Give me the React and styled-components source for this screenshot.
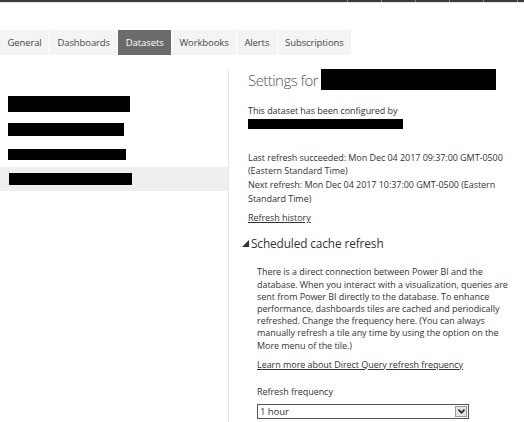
import React from 'react';
import styled, { createGlobalStyle } from 'styled-components';

const Global = createGlobalStyle`
  html, body {
    margin: 0;
    padding: 0;
    background: #fff;
  }
  body {
    font-family: 'Open Sans', 'Noto Sans', sans-serif;
    color: #333;
    width: 524px;
    height: 422px;
    overflow: hidden;
  }
`;

const Page = styled.div`
  display: flex;
  flex-direction: column;
  height: 422px;
`;

// dark strip across the top, with faint tick marks on the right
const TopRule = styled.div`
  flex-shrink: 0;
  height: 2px;
  border-bottom: 1px solid #e4e4e4;
  background-color: #3a3a3a;
  background-image: repeating-linear-gradient(
    to right,
    #8a8a8a 0 1px,
    transparent 1px 34px
  );
  background-size: 177px 100%;
  background-position: 347px 0;
  background-repeat: no-repeat;
`;

const Tabs = styled.nav`
  flex-shrink: 0;
  display: flex;
  gap: 1px;
  margin-top: 27px;
`;

const Tab = styled.div`
  height: 25px;
  padding: 0 7.4px;
  display: flex;
  align-items: center;
  font-size: 9.5px;
  letter-spacing: -0.1px;
  background: ${(p) => (p.$active ? '#6b6b6b' : '#f4f4f4')};
  color: ${(p) => (p.$active ? '#fff' : '#444')};
`;

const Body = styled.div`
  display: flex;
  flex: 1;
  min-height: 0;
  margin-top: 13px;
`;

const Sidebar = styled.aside`
  width: 228px;
  border-right: 1px solid #e8e8e8;
  padding-top: 24px;
  display: flex;
  flex-direction: column;
  gap: 1px;
`;

const Item = styled.div`
  height: 24px;
  display: flex;
  align-items: center;
  padding-left: ${(p) => (p.$selected ? 9 : 8)}px;
  background: ${(p) => (p.$selected ? '#efefef' : 'transparent')};
`;

const Redact = styled.span`
  display: ${(p) => (p.$block ? 'block' : 'inline-block')};
  flex-shrink: 0;
  background: #000;
  width: ${(p) => p.$w}px;
  height: ${(p) => p.$h || 12}px;
`;

const Content = styled.main`
  flex: 1;
  padding-left: 19px;
  padding-top: 1px;
  font-size: 9px;
  letter-spacing: -0.05px;
`;

const Heading = styled.h1`
  margin: 0;
  display: flex;
  align-items: center;
  gap: 3px;
  font-size: 15px;
  font-weight: 300;
  color: #555;
  letter-spacing: -0.55px;
`;

const Para = styled.p`
  margin: ${(p) => p.$mt || 0}px 0 0;
  line-height: ${(p) => p.$lh || 14.5}px;
`;

const Link = styled.a`
  display: block;
  width: fit-content;
  line-height: 12px;
  color: #333;
  text-decoration: underline;
  margin-top: ${(p) => p.$mt || 0}px;
`;

const Section = styled.h2`
  margin: 11px 0 0 -6px;
  display: flex;
  align-items: center;
  gap: 2px;
  line-height: 16px;
  font-size: 11.8px;
  font-weight: 400;
  color: #333;
  letter-spacing: -0.1px;
`;

const Indent = styled.div`
  padding-left: 9px;
  width: 258px;
`;

const Label = styled.div`
  margin-top: 14px;
  line-height: 14px;
`;

const Select = styled.div`
  box-sizing: border-box;
  margin-top: 5px;
  width: 212px;
  height: 15px;
  border: 1px solid #555;
  display: flex;
  align-items: center;
  justify-content: space-between;
  padding-left: 2px;
  font-size: 9.5px;
  background: #fff;
`;

const Arrow = styled.span`
  width: 12px;
  height: 11px;
  margin-right: 1px;
  background: #e4e4e4;
  border: 1px solid #9a9a9a;
  box-sizing: border-box;
  display: flex;
  align-items: center;
  justify-content: center;
`;

const sideItems = [
  { w: 122, h: 16 },
  { w: 116, h: 13 },
  { w: 118, h: 11 },
  { w: 123, h: 12, selected: true },
];

const tabs = ['General', 'Dashboards', 'Datasets', 'Workbooks', 'Alerts', 'Subscriptions'];

export default function App() {
  return (
    <Page>
      <Global />
      <TopRule />
      <Tabs>
        {tabs.map((t) => (
          <Tab key={t} $active={t === 'Datasets'}>
            {t}
          </Tab>
        ))}
      </Tabs>
      <Body>
        <Sidebar>
          {sideItems.map((it, i) => (
            <Item key={i} $selected={it.selected}>
              <Redact $w={it.w} $h={it.h} />
            </Item>
          ))}
        </Sidebar>
        <Content>
          <Heading>
            Settings for <Redact $w={175} $h={21} />
          </Heading>
          <Para $mt={14}>This dataset has been configured by</Para>
          <Redact $block $w={155} $h={10} />
          <Para $mt={22} $lh={13.7}>
            Last refresh succeeded: Mon Dec 04 2017 09:37:00 GMT-0500
            <br />
            (Eastern Standard Time)
            <br />
            Next refresh: Mon Dec 04 2017 10:37:00 GMT-0500 (Eastern
            <br />
            Standard Time)
          </Para>
          <Link $mt={7}>Refresh history</Link>
          <Section>
            <svg width="7" height="7" viewBox="0 0 7 7">
              <path d="M7 0 L7 7 L0 7 Z" fill="#333" />
            </svg>
            Scheduled cache refresh
          </Section>
          <Indent>
            <Para $mt={15} $lh={12.2}>
              There is a direct connection between Power BI and the database. When you
              interact with a visualization, queries are sent from Power BI directly to the
              database. To enhance performance, dashboards tiles are cached and periodically
              refreshed. Change the frequency here. (You can always manually refresh a tile
              any time by using the option on the More menu of the tile.)
            </Para>
            <Link $mt={7}>Learn more about Direct Query refresh frequency</Link>
            <Label>Refresh frequency</Label>
            <Select>
              1 hour
              <Arrow>
                <svg width="7" height="5" viewBox="0 0 7 5">
                  <path d="M0.5 0.5 L3.5 3.8 L6.5 0.5" stroke="#222" strokeWidth="1.6" fill="none" />
                </svg>
              </Arrow>
            </Select>
          </Indent>
        </Content>
      </Body>
    </Page>
  );
}
